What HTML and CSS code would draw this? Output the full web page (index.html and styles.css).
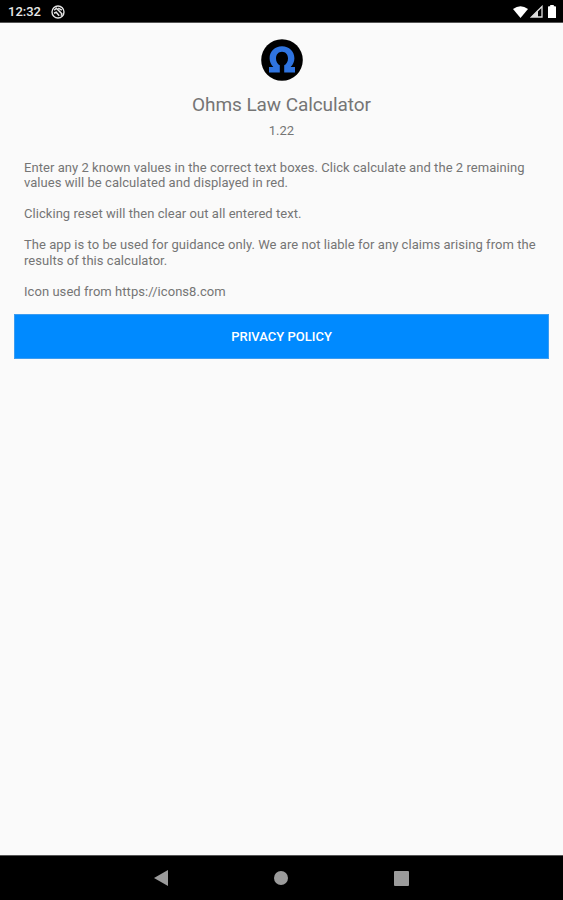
FILE: index.html
```html
<!DOCTYPE html>
<html lang="en">
<head>
    <meta charset="utf-8">
    <meta name="viewport" content="width=device-width, initial-scale=1">
    <title>Ohms Law Calculator</title>
    <link rel="stylesheet" href="styles.css">
</head>
<body>
    <div class="screen">
        <!-- Status bar -->
        <header class="statusbar">
            <span class="clock">12:32</span>
            <svg class="notify" width="14" height="14" viewBox="0 0 14 14">
                <circle cx="7" cy="7" r="6" fill="none" stroke="#e4e4e4" stroke-width="1.4"/>
                <path d="M3.2 5.2L5.4 3.3L10.8 8.8L10.2 10.8M3 8.2L5.2 7.2L8.2 10.8M7.2 3.2L10.8 5.2" fill="none" stroke="#e4e4e4" stroke-width="1.5"/>
            </svg>
            <div class="status-icons">
                <svg width="15" height="12" viewBox="0 0 15 12">
                    <path d="M0 3Q7.5 -2.6 15 3L7.5 12Z" fill="#fff"/>
                </svg>
                <svg width="13" height="13" viewBox="0 0 13 13">
                    <path d="M1.5 12L12 1.5V12Z" fill="none" stroke="#ddd" stroke-width="1.3"/>
                    <path d="M8 5.5V12H1.5Z" fill="#ddd"/>
                </svg>
                <svg width="8" height="13" viewBox="0 0 8 13">
                    <path d="M0 2Q0 1.2 .8 1.2H2.2V0H5.8V1.2H7.2Q8 1.2 8 2V13H0Z" fill="#fff"/>
                </svg>
            </div>
        </header>

        <main class="about">
            <svg class="logo" width="42" height="42" viewBox="0 0 42 42">
                <circle cx="21" cy="21" r="20.8" fill="#000"/>
                <path d="M8 33.5V28H12.4C10 25.8 8.6 22.6 8.6 19.2C8.6 12.2 13.8 7.2 21 7.2C28.2 7.2 33.4 12.2 33.4 19.2C33.4 22.6 32 25.8 29.6 28H34V33.5H23.2V26.2C25.6 25 27 22.4 27 19.4C27 15.6 24.6 12.8 21 12.8C17.4 12.8 15 15.6 15 19.4C15 22.4 16.4 25 18.8 26.2V33.5Z" fill="#2f74e0"/>
            </svg>
            <h1 class="title">Ohms Law Calculator</h1>
            <div class="version">1.22</div>
            <div class="info">
                <p>Enter any 2 known values in the correct text boxes. Click calculate and the 2 remaining<br>values will be calculated and displayed in red.</p>
                <p>Clicking reset will then clear out all entered text.</p>
                <p>The app is to be used for guidance only. We are not liable for any claims arising from the<br>results of this calculator.</p>
                <p>Icon used from https://icons8.com</p>
            </div>
            <button class="btn-policy" type="button">PRIVACY POLICY</button>
        </main>

        <!-- Bottom navigation -->
        <nav class="navbar">
            <svg width="14" height="16" viewBox="0 0 14 16"><path d="M0 8L14 0V16Z" fill="#9b9b9b"/></svg>
            <svg width="14" height="14" viewBox="0 0 14 14"><circle cx="7" cy="7" r="7" fill="#9b9b9b"/></svg>
            <svg width="15" height="15" viewBox="0 0 15 15"><rect width="15" height="15" rx="1" fill="#9b9b9b"/></svg>
        </nav>
    </div>
</body>
</html>
```

FILE: styles.css
```css
* {
    box-sizing: border-box;
}

body {
    margin: 0;
    background: #fafafa;
    color: #757575;
    font-family: Roboto, "Liberation Sans", sans-serif;
}

svg {
    display: block;
    flex: none;
}

.screen {
    display: flex;
    flex-direction: column;
    height: 900px;
}

/* status bar */
.statusbar {
    display: flex;
    align-items: center;
    height: 23px;
    padding: 1px 7px 0 8px;
    background: #000;
    border-bottom: 1px solid #555;
}

.clock {
    width: 43px;
    color: #e8e8e8;
    font-size: 13px;
    font-weight: 500;
    line-height: 22px;
}

.status-icons {
    display: flex;
    align-items: center;
    gap: 2px;
    margin-left: auto;
}

.status-icons svg:last-child {
    margin-left: 3px;
}

/* about page */
.about {
    display: flex;
    flex-direction: column;
    align-items: center;
    flex: 1;
    padding: 16px 14px 0;
}

.title {
    margin: 12px 0 0;
    font-size: 19px;
    font-weight: 400;
    line-height: 24px;
    letter-spacing: -0.08px;
}

.version {
    margin-top: 6px;
    font-size: 13px;
    line-height: 16px;
}

.info {
    align-self: stretch;
    margin-top: 20.5px;
    padding-left: 10px;
    font-size: 13px;
    line-height: 15.5px;
    letter-spacing: 0.05px;
    white-space: nowrap;
}

.info p {
    margin: 0 0 15.5px;
}

.btn-policy {
    align-self: stretch;
    height: 45px;
    margin-top: -1px;
    padding: 0;
    border: 1px solid #3c9cf0;
    background: #008aff;
    color: #fff;
    font-family: inherit;
    font-size: 13px;
    font-weight: 500;
}

/* bottom navigation */
.navbar {
    display: flex;
    align-items: center;
    justify-content: space-between;
    height: 45px;
    padding: 0 154px;
    background: #000;
    border-top: 1px solid #555;
}
```
